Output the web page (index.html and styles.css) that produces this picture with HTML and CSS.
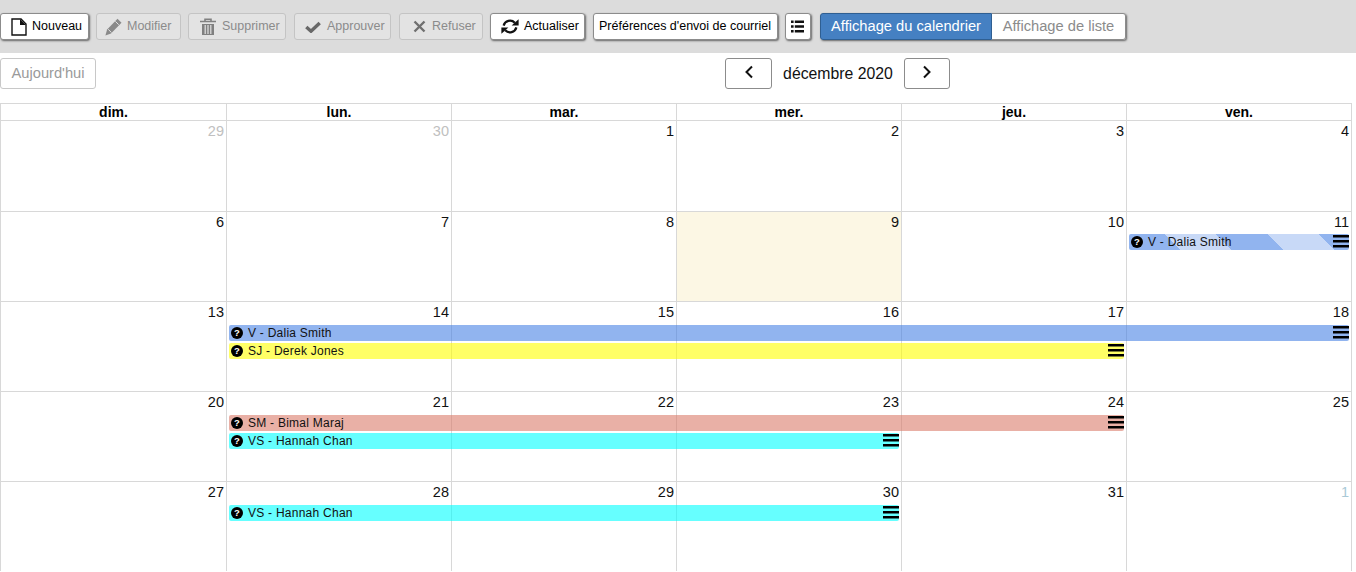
FILE: index.html
```html
<!DOCTYPE html>
<html lang="fr">
<head>
<meta charset="utf-8">
<title>Calendrier</title>
<link rel="stylesheet" href="styles.css">
</head>
<body>
<header class="toolbar">
  <button class="btn btn-new"><svg class="ico" width="16" height="18" viewBox="0 0 16 18"><path d="M1 1h9l5 5v11H1z" fill="#fff" stroke="#111" stroke-width="1.4"/><path d="M9 1l6 6H9z" fill="#111"/></svg>Nouveau</button>
  <button class="btn off btn-edit"><svg class="ico" width="17" height="18" viewBox="0 0 17 18"><path d="M12.5 .8l4 4L6 15.5.4 17.4l1.7-5.9z" fill="#8a8a8a"/><path d="M3.2 11.3l3.3 3.3M10.4 3.4l3.3 3.3" stroke="#e2e2e2" stroke-width="1"/></svg>Modifier</button>
  <button class="btn off btn-del"><svg class="ico" width="16" height="18" viewBox="0 0 16 18"><path d="M0 3.5h16M5 3V1.2h6V3" fill="none" stroke="#808080" stroke-width="1.6"/><path d="M2 6h12v11H2z" fill="#808080"/><path d="M5.2 7v9M8 7v9M10.8 7v9" stroke="#e2e2e2" stroke-width="1.2"/></svg>Supprimer</button>
  <button class="btn off btn-ok"><svg class="ico" width="16" height="12" viewBox="0 0 16 12"><path d="M1.3 6l4.7 4.2L14.7 2" fill="none" stroke="#686868" stroke-width="3.4"/></svg>Approuver</button>
  <button class="btn off btn-no"><svg class="ico" width="13" height="13" viewBox="0 0 13 13"><path d="M1.5 1.5l10 10M11.5 1.5l-10 10" stroke="#707070" stroke-width="2.4"/></svg>Refuser</button>
  <button class="btn btn-refresh"><svg class="ico" width="18" height="17" viewBox="0 0 18 17"><path d="M2.6 7.6A6.6 6.6 0 0 1 13.8 4.8" fill="none" stroke="#111" stroke-width="2.2"/><path d="M10.6 7.4h7V1.2z" fill="#111"/><path d="M15.4 9.4A6.6 6.6 0 0 1 4.2 12.2" fill="none" stroke="#111" stroke-width="2.2"/><path d="M7.4 9.6h-7v6.2z" fill="#111"/></svg>Actualiser</button>
  <button class="btn btn-prefs">Préférences d'envoi de courriel</button>
  <button class="btn btn-list" aria-label="Liste"><svg width="13" height="13" viewBox="0 0 13 13"><path d="M0 .5h2.6v2.6H0zM0 5.2h2.6v2.6H0zM0 9.9h2.6v2.6H0zM3.8 .5H13v2.6H3.8zM3.8 5.2H13v2.6H3.8zM3.8 9.9H13v2.6H3.8z" fill="#111"/></svg></button>
  <div class="segment">
    <button class="seg seg-on">Affichage du calendrier</button>
    <button class="seg">Affichage de liste</button>
  </div>
</header>

<nav class="nav">
  <button class="today">Aujourd'hui</button>
  <div class="month">
    <button class="arrow" aria-label="Précédent"><svg width="10" height="14" viewBox="0 0 10 14"><path d="M8 1.5L2.5 7 8 12.5" fill="none" stroke="#111" stroke-width="2"/></svg></button>
    <span class="month-name">décembre 2020</span>
    <button class="arrow" aria-label="Suivant"><svg width="10" height="14" viewBox="0 0 10 14"><path d="M2 1.5L7.5 7 2 12.5" fill="none" stroke="#111" stroke-width="2"/></svg></button>
  </div>
</nav>

<main class="calendar">
  <div class="heads">
    <div class="head">dim.</div><div class="head">lun.</div><div class="head">mar.</div><div class="head">mer.</div><div class="head">jeu.</div><div class="head">ven.</div>
  </div>

  <div class="week week-tall">
    <div class="day muted">29</div><div class="day muted">30</div><div class="day">1</div><div class="day">2</div><div class="day">3</div><div class="day">4</div>
  </div>

  <div class="week week-early">
    <div class="day">6</div><div class="day">7</div><div class="day">8</div><div class="day today-cell">9</div><div class="day">10</div><div class="day">11</div>
    <div class="event striped c6 r1"><i class="q">?</i><span>V - Dalia Smith</span><svg class="menu" width="16" height="14" viewBox="0 0 16 14"><path d="M0 0h16v2.5H0zM0 5h16v2.5H0zM0 10h16v2.5H0z" fill="#000"/></svg></div>
  </div>

  <div class="week">
    <div class="day">13</div><div class="day">14</div><div class="day">15</div><div class="day">16</div><div class="day">17</div><div class="day">18</div>
    <div class="event blue c2-6 r1"><i class="q">?</i><span>V - Dalia Smith</span><svg class="menu" width="16" height="14" viewBox="0 0 16 14"><path d="M0 0h16v2.5H0zM0 5h16v2.5H0zM0 10h16v2.5H0z" fill="#000"/></svg></div>
    <div class="event yellow c2-5 r2"><i class="q">?</i><span>SJ - Derek Jones</span><svg class="menu" width="16" height="14" viewBox="0 0 16 14"><path d="M0 0h16v2.5H0zM0 5h16v2.5H0zM0 10h16v2.5H0z" fill="#000"/></svg></div>
  </div>

  <div class="week">
    <div class="day">20</div><div class="day">21</div><div class="day">22</div><div class="day">23</div><div class="day">24</div><div class="day">25</div>
    <div class="event pink c2-5 r1"><i class="q">?</i><span>SM - Bimal Maraj</span><svg class="menu" width="16" height="14" viewBox="0 0 16 14"><path d="M0 0h16v2.5H0zM0 5h16v2.5H0zM0 10h16v2.5H0z" fill="#000"/></svg></div>
    <div class="event cyan c2-4 r2"><i class="q">?</i><span>VS - Hannah Chan</span><svg class="menu" width="16" height="14" viewBox="0 0 16 14"><path d="M0 0h16v2.5H0zM0 5h16v2.5H0zM0 10h16v2.5H0z" fill="#000"/></svg></div>
  </div>

  <div class="week">
    <div class="day">27</div><div class="day">28</div><div class="day">29</div><div class="day">30</div><div class="day">31</div><div class="day muted next">1</div>
    <div class="event cyan c2-4 r1"><i class="q">?</i><span>VS - Hannah Chan</span><svg class="menu" width="16" height="14" viewBox="0 0 16 14"><path d="M0 0h16v2.5H0zM0 5h16v2.5H0zM0 10h16v2.5H0z" fill="#000"/></svg></div>
  </div>
</main>
</body>
</html>
```
FILE: styles.css
```css
* { box-sizing: border-box; }

html, body {
  margin: 0;
  padding: 0;
  background: #fff;
  color: #111;
  font-family: "Liberation Sans", Arial, sans-serif;
  overflow: hidden;
}

button {
  font-family: inherit;
  cursor: pointer;
}

.toolbar {
  height: 53px;
  background: #dcdcdc;
  padding-top: 13px;
  display: flex;
  align-items: flex-start;
}

.btn {
  height: 27px;
  display: flex;
  align-items: center;
  gap: 5px;
  padding: 0 5px 2px 10px;
  background: #fff;
  color: #000;
  font-size: 12.5px;
  border: 1px solid #8c8c8c;
  border-radius: 3px;
  box-shadow: 1px 1px 2px #666;
  white-space: nowrap;
}

.btn.off {
  background: #e3e3e3;
  color: #8b8b8b;
  border-color: #c4c4c4;
  box-shadow: none;
}

.ico { flex: none; margin-top: 2px; }

.btn-new { width: 89px; margin-right: 7px; }
.btn-edit { width: 85px; margin-right: 7px; padding-left: 8px; }
.btn-del { width: 98px; margin-right: 8px; padding-left: 11px; gap: 6px; }
.btn-ok { width: 97px; margin-right: 8px; padding-left: 10px; gap: 6px; }
.btn-no { width: 84px; margin-right: 7px; padding-left: 13px; gap: 6px; }
.btn-refresh { width: 95px; margin-right: 8px; padding-left: 10px; }
.btn-prefs { width: 185px; margin-right: 7px; padding-left: 5px; }
.btn-list { width: 26px; margin-right: 9px; padding: 0 0 1px 5px; }

.segment {
  display: flex;
  height: 27px;
  border-radius: 3px;
  box-shadow: 1px 1px 2px #666;
}

.seg {
  height: 27px;
  padding: 0 0 2px;
  font-size: 14.7px;
  background: #fff;
  color: #8b8b8b;
  border: 1px solid #8c8c8c;
  border-left: 0;
  border-radius: 0 3px 3px 0;
  width: 134px;
}

.seg-on {
  width: 172px;
  background: #4580c2;
  color: #fff;
  border: 1px solid #2f5f92;
  border-radius: 3px 0 0 3px;
}

.nav {
  height: 50px;
  padding-top: 5px;
  display: flex;
  align-items: flex-start;
}

.today {
  width: 96px;
  height: 31px;
  background: #fff;
  color: #9a9a9a;
  font-size: 14.7px;
  border: 1px solid #c8c8c8;
  border-radius: 3px;
  padding: 0 0 2px;
}

.month {
  margin-left: 629px;
  display: flex;
  align-items: center;
}

.arrow {
  width: 47px;
  height: 31px;
  padding: 0 0 4px;
  background: #fff;
  border: 1px solid #8c8c8c;
  border-radius: 3px;
  display: flex;
  align-items: center;
  justify-content: center;
}

.month .arrow:last-child { width: 46px; }

.month-name {
  width: 132px;
  text-align: center;
  font-size: 15.8px;
  color: #111;
}

.calendar { width: 1352px; }

.heads, .week {
  display: grid;
  grid-template-columns: 226px repeat(4, 225px) 226px;
}

.head {
  height: 17px;
  border-top: 1px solid #d8d8d8;
  border-left: 1px solid #d8d8d8;
  text-align: center;
  font-size: 14px;
  font-weight: 700;
  line-height: 17px;
  color: #000;
}

.head:last-child { border-right: 1px solid #d8d8d8; }

.week {
  height: 90px;
  grid-template-rows: 24px 16px 2px 16px 1fr;
}

.week-tall { height: 91px; }
.week-early { grid-template-rows: 23px 16px 2px 16px 1fr; }

.day {
  grid-row: 1 / -1;
  border-top: 1px solid #d8d8d8;
  border-left: 1px solid #d8d8d8;
  text-align: right;
  padding: 2px 2px 0 0;
  font-size: 14.5px;
  line-height: 17px;
  color: #111;
}

.day:nth-child(1) { grid-column: 1; }
.day:nth-child(2) { grid-column: 2; }
.day:nth-child(3) { grid-column: 3; }
.day:nth-child(4) { grid-column: 4; }
.day:nth-child(5) { grid-column: 5; }
.day:nth-child(6) { grid-column: 6; border-right: 1px solid #d8d8d8; }

.muted { color: #c0c0c0; }
.next { color: #a9c9d6; }
.today-cell { background: #fcf7e4; }

.event {
  height: 16px;
  display: flex;
  align-items: center;
  border-radius: 2px;
  margin: 0 2px 0 3px;
  padding-left: 2px;
  font-size: 12px;
  letter-spacing: 0.25px;
  color: #111;
  white-space: nowrap;
}

.r1 { grid-row: 2; }
.r2 { grid-row: 4; }
.c6 { grid-column: 6; margin-right: 3px; }
.c2-6 { grid-column: 2 / 7; margin-right: 3px; }
.c2-5 { grid-column: 2 / 6; }
.c2-4 { grid-column: 2 / 5; }

.blue { background: rgba(72, 130, 228, 0.6); }
.yellow { background: rgba(255, 255, 0, 0.6); }
.pink { background: rgba(218, 123, 107, 0.6); }
.cyan { background: rgba(0, 255, 255, 0.6); }

.striped {
  background: repeating-linear-gradient(45deg, #91b4ef 0 36.4px, #c8d9f7 36.4px 72.8px);
}

.q {
  flex: none;
  width: 12px;
  height: 12px;
  margin-right: 5px;
  border-radius: 50%;
  background: #000;
  color: #fff;
  font-style: normal;
  font-weight: 700;
  font-size: 9.5px;
  line-height: 12px;
  letter-spacing: 0;
  text-align: center;
}

.menu {
  flex: none;
  margin-left: auto;
}
```
